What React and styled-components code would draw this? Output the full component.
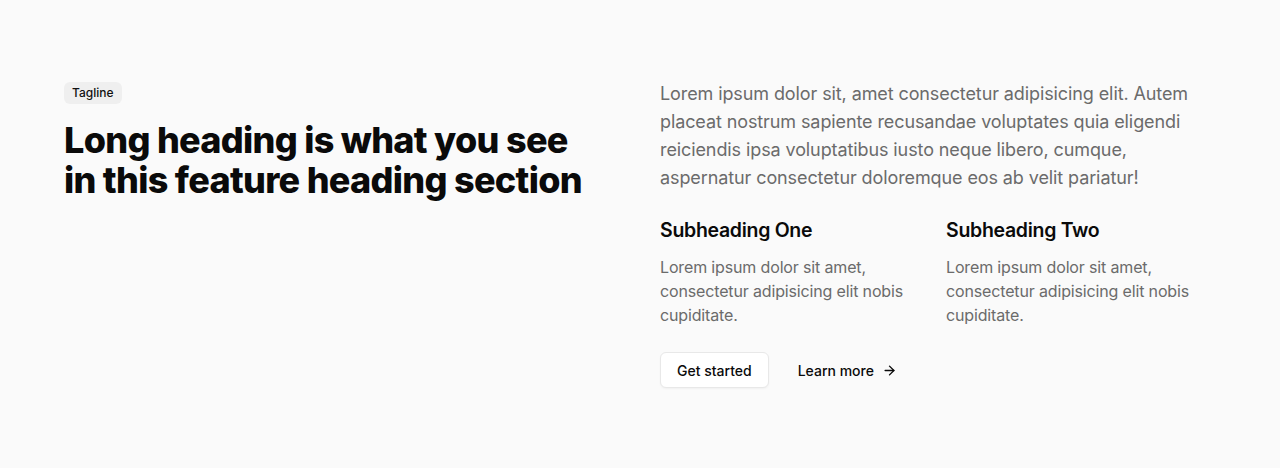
import styled, { createGlobalStyle } from "styled-components"

const GlobalStyle = createGlobalStyle`
  * { box-sizing: border-box; }
  body {
    margin: 0;
    background: #fafafa;
    font-family: Inter, "Noto Sans", sans-serif;
    color: #0a0a0a;
  }
`

const Section = styled.section`
  padding: 80px 64px;
  display: grid;
  grid-template-columns: 548px 1fr;
  column-gap: 48px;
  min-height: 468px;
`

const Left = styled.div`
  display: flex;
  flex-direction: column;
  align-items: flex-start;
`

const Tagline = styled.span`
  display: inline-block;
  background: #efefef;
  border-radius: 6px;
  padding: 4px 8px;
  font-size: 12px;
  line-height: 14px;
  font-weight: 500;
  color: #111;
  margin-top: 2px;
`

const Heading = styled.h2`
  margin: 16px 0 0;
  font-size: 36px;
  line-height: 40px;
  font-weight: 800;
  letter-spacing: -0.7px;
  color: #0a0a0a;
`

const Right = styled.div`
  display: flex;
  flex-direction: column;
`

const Lead = styled.p`
  margin: 0;
  font-size: 18px;
  line-height: 28px;
  color: #6b6b6b;
  letter-spacing: -0.1px;
`

const Features = styled.div`
  display: grid;
  grid-template-columns: 1fr 1fr;
  column-gap: 16px;
  margin-top: 24px;
`

const Feature = styled.div``

const SubHeading = styled.h3`
  margin: 0;
  font-size: 19.5px;
  line-height: 28px;
  font-weight: 600;
  letter-spacing: -0.3px;
  color: #0a0a0a;
`

const SubText = styled.p`
  margin: 11px 0 0;
  font-size: 16px;
  line-height: 24px;
  color: #6b6b6b;
  letter-spacing: -0.15px;
`

const Actions = styled.div`
  display: flex;
  align-items: center;
  gap: 12px;
  margin-top: 25px;
`

const Button = styled.button`
  display: inline-flex;
  align-items: center;
  gap: 8px;
  height: 36px;
  padding: 0 16px;
  font-family: inherit;
  font-size: 14px;
  font-weight: 500;
  color: #0a0a0a;
  border-radius: 6px;
  cursor: pointer;
  background: ${p => (p.$ghost ? "transparent" : "#ffffff")};
  border: 1px solid ${p => (p.$ghost ? "transparent" : "#e8e8e8")};
  box-shadow: ${p => (p.$ghost ? "none" : "0 1px 2px rgba(0,0,0,0.04)")};
`

const Arrow = () => (
  <svg width="15" height="15" viewBox="0 0 24 24" fill="none" stroke="currentColor" strokeWidth="2.2" strokeLinecap="round" strokeLinejoin="round">
    <path d="M5 12h14" />
    <path d="m12 5 7 7-7 7" />
  </svg>
)

const features = [
  { title: "Subheading One", text: "Lorem ipsum dolor sit amet, consectetur adipisicing elit nobis cupiditate." },
  { title: "Subheading Two", text: "Lorem ipsum dolor sit amet, consectetur adipisicing elit nobis cupiditate." },
]

const App = () => {
  return (
    <>
      <GlobalStyle />
      <Section>
        <Left>
          <Tagline>Tagline</Tagline>
          <Heading>
            Long heading is what you see
            <br />
            in this feature heading section
          </Heading>
        </Left>
        <Right>
          <Lead>
            Lorem ipsum dolor sit, amet consectetur adipisicing elit. Autem placeat nostrum sapiente recusandae
            voluptates quia eligendi reiciendis ipsa voluptatibus iusto neque libero, cumque,
            <br />
            aspernatur consectetur doloremque eos ab velit pariatur!
          </Lead>
          <Features>
            {features.map(f => (
              <Feature key={f.title}>
                <SubHeading>{f.title}</SubHeading>
                <SubText>{f.text}</SubText>
              </Feature>
            ))}
          </Features>
          <Actions>
            <Button>Get started</Button>
            <Button $ghost>
              Learn more <Arrow />
            </Button>
          </Actions>
        </Right>
      </Section>
    </>
  )
}

export default App
